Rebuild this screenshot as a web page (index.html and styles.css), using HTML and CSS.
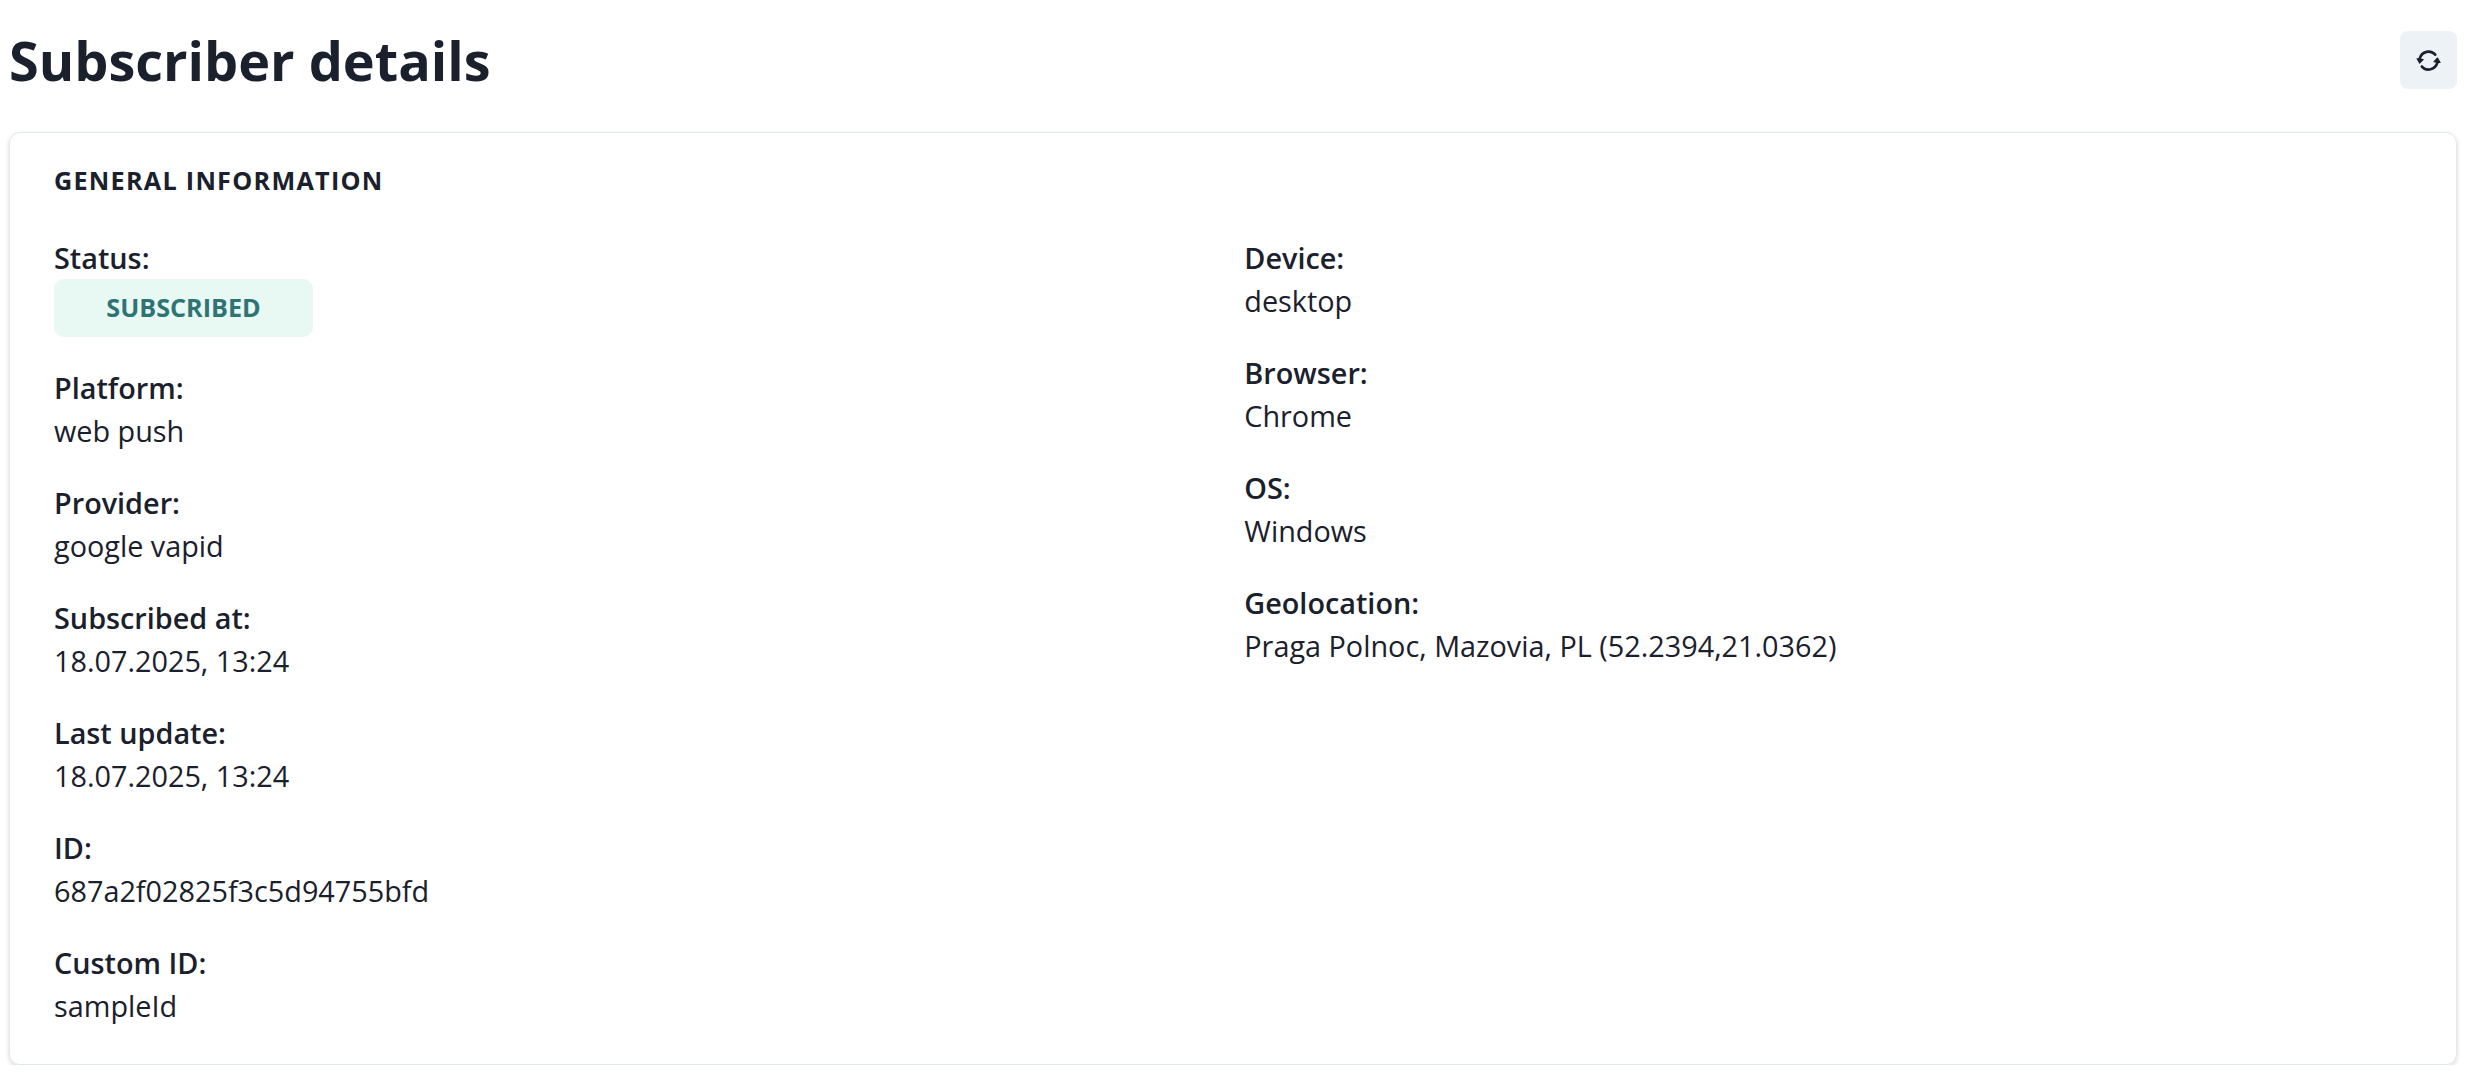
FILE: index.html
```html
<!DOCTYPE html>
<html lang="en">

<head>
  <meta charset="UTF-8">
  <meta name="viewport" content="width=device-width, initial-scale=1.0">
  <title>Subscriber details</title>
  <link rel="stylesheet" href="styles.css">
</head>

<body>
  <header class="page-header">
    <h1>Subscriber details</h1>
    <button class="refresh" type="button" aria-label="Refresh">
      <svg viewBox="0 0 24 24" fill="currentColor">
        <path d="M10.319,4.936a7.239,7.239,0,0,1,7.1,2.252,1.25,1.25,0,1,0,1.872-1.657A9.737,9.737,0,0,0,9.743,2.5,10.269,10.269,0,0,0,2.378,9.61a.249.249,0,0,1-.271.178l-1.033-.13A.491.491,0,0,0,.6,9.877a.5.5,0,0,0-.019.526l2.476,4.342a.5.5,0,0,0,.373.248.43.43,0,0,0,.062,0,.5.5,0,0,0,.359-.152l3.477-3.593a.5.5,0,0,0-.3-.844L5.15,10.172a.25.25,0,0,1-.2-.333A7.7,7.7,0,0,1,10.319,4.936Z"/>
        <path d="M23.406,14.1a.5.5,0,0,0,.015-.526l-2.5-4.329A.5.5,0,0,0,20.546,9a.489.489,0,0,0-.421.151l-3.456,3.614a.5.5,0,0,0,.3.842l1.848.221a.249.249,0,0,1,.183.117.253.253,0,0,1,.023.216,7.688,7.688,0,0,1-5.369,4.9,7.243,7.243,0,0,1-7.1-2.253,1.25,1.25,0,1,0-1.872,1.656,9.74,9.74,0,0,0,9.549,3.03,10.261,10.261,0,0,0,7.369-7.12.251.251,0,0,1,.27-.179l1.058.127a.422.422,0,0,0,.06,0A.5.5,0,0,0,23.406,14.1Z"/>
      </svg>
    </button>
  </header>
  <section class="card">
    <h2>General information</h2>
    <div class="columns">
      <dl>
        <div class="field">
          <dt>Status:</dt>
          <dd class="badge">Subscribed</dd>
        </div>
        <div class="field">
          <dt>Platform:</dt>
          <dd>web push</dd>
        </div>
        <div class="field">
          <dt>Provider:</dt>
          <dd>google vapid</dd>
        </div>
        <div class="field">
          <dt>Subscribed at:</dt>
          <dd>18.07.2025, 13:24</dd>
        </div>
        <div class="field">
          <dt>Last update:</dt>
          <dd>18.07.2025, 13:24</dd>
        </div>
        <div class="field">
          <dt>ID:</dt>
          <dd>687a2f02825f3c5d94755bfd</dd>
        </div>
        <div class="field">
          <dt>Custom ID:</dt>
          <dd>sampleId</dd>
        </div>
      </dl>
      <dl>
        <div class="field">
          <dt>Device:</dt>
          <dd>desktop</dd>
        </div>
        <div class="field">
          <dt>Browser:</dt>
          <dd>Chrome</dd>
        </div>
        <div class="field">
          <dt>OS:</dt>
          <dd>Windows</dd>
        </div>
        <div class="field">
          <dt>Geolocation:</dt>
          <dd>Praga Polnoc, Mazovia, PL (52.2394,21.0362)</dd>
        </div>
      </dl>
    </div>
  </section>
</body>

</html>
```
FILE: styles.css
```css
* {
  box-sizing: border-box;
}

body {
  font-family: "Open Sans", sans-serif;
  font-size: 28.8px;
  line-height: 43.2px;
  color: #1a202c;
  background: #fff;
  margin: 0;
  padding: 31px 13px 0 9px;
}

h1,
h2,
dl,
dd {
  margin: 0;
}

.page-header {
  display: flex;
  align-items: center;
  justify-content: space-between;
  height: 58px;
}

h1 {
  font-size: 54px;
  line-height: 65px;
}

.refresh {
  display: flex;
  align-items: center;
  justify-content: center;
  width: 57px;
  height: 58px;
  padding: 1px 0 0;
  color: #1a202c;
  background: #edf2f7;
  border: 0;
  border-radius: 8px;
}

.refresh svg {
  width: 25.2px;
  height: 25.2px;
}

.card {
  height: 933px;
  margin-top: 43px;
  padding: 28px 43px 28px 44px;
  border: 1px solid #e2e8f0;
  border-radius: 11px;
  box-shadow: 0 2px 5px rgba(0, 0, 0, 0.1), 0 2px 4px rgba(0, 0, 0, 0.06);
}

h2 {
  font-size: 25.2px;
  line-height: 38px;
  letter-spacing: 1.26px;
  text-transform: uppercase;
}

.columns {
  display: grid;
  grid-template-columns: 1fr 1fr;
  gap: 21.6px;
  margin-top: 37px;
}

.field {
  margin-bottom: 28.6px;
}

dt {
  font-weight: 600;
}

.badge {
  width: 259px;
  height: 58px;
  line-height: 57px;
  font-size: 25.2px;
  font-weight: 700;
  text-align: center;
  text-transform: uppercase;
  color: #2f7474;
  background: #e8f8f3;
  border-radius: 10px;
}
```
